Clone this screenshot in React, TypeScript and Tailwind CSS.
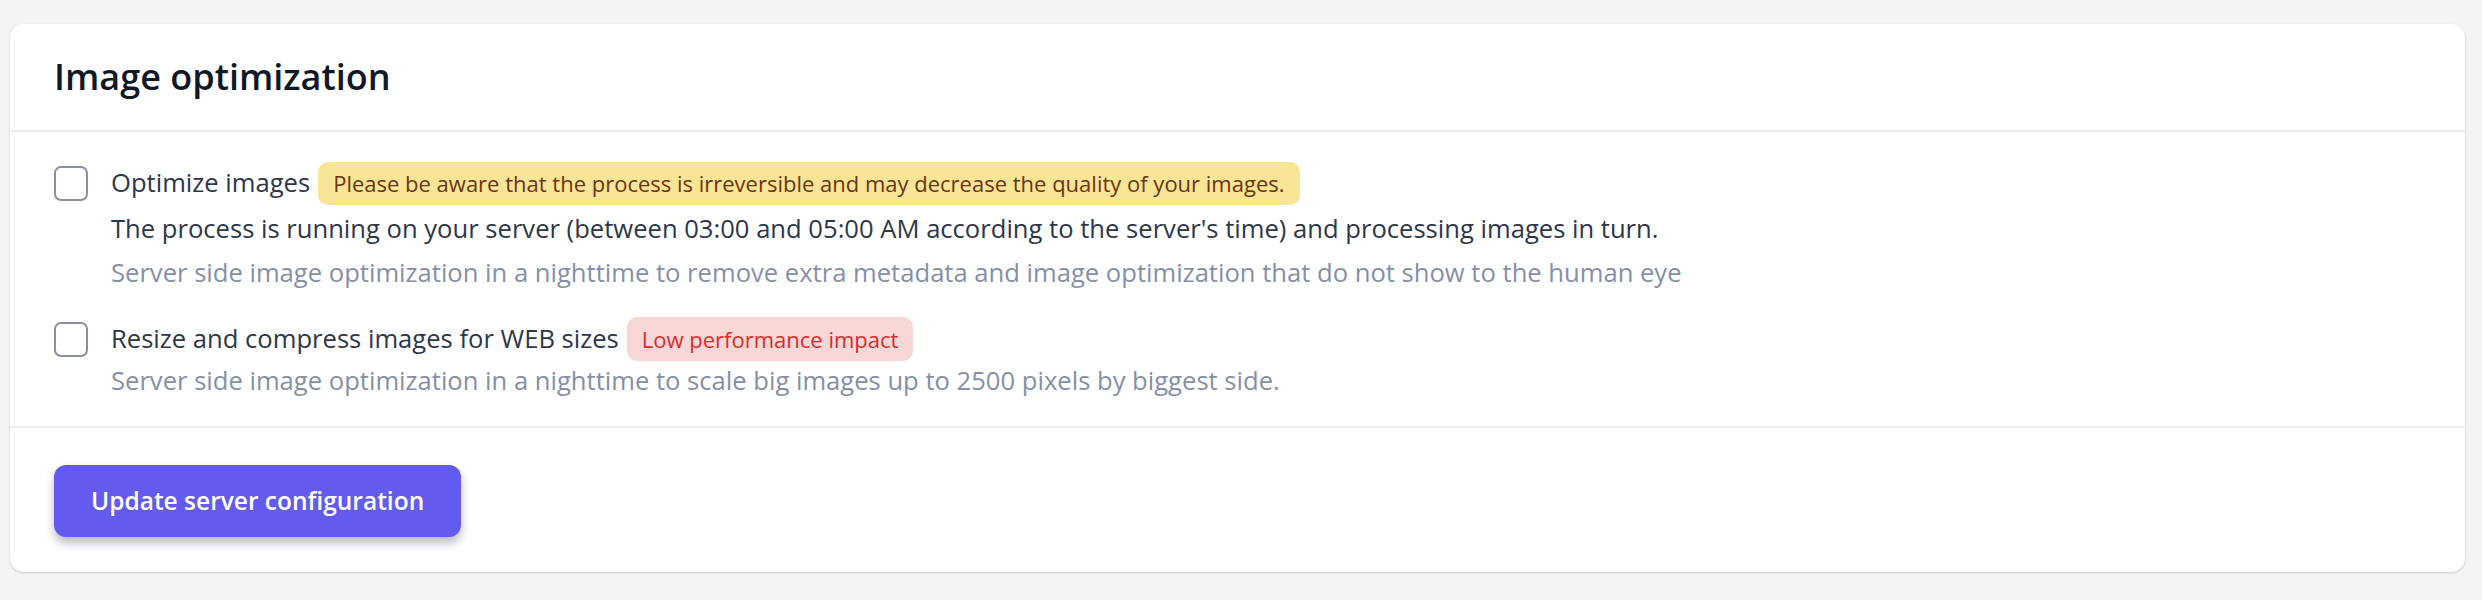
import React from "react";

function Checkbox() {
  return (
    <span className="block w-[34px] h-[35px] shrink-0 rounded-[7px] border-2 border-[#8b909c] bg-white" />
  );
}

export default function App() {
  return (
    <div
      className="w-[2482px] h-[600px] bg-[#f3f4f6] pt-[24px] pl-[10px]"
      style={{ fontFamily: '"Open Sans", "Noto Sans", sans-serif' }}
    >
      <div className="w-[2455px] h-[548px] bg-white rounded-[14px] shadow-[0_1px_3px_rgba(0,0,0,0.12),0_1px_2px_rgba(0,0,0,0.06)] flex flex-col">
        <div className="h-[108px] px-[44px] flex items-center border-b-2 border-[#e8e9ee]">
          <h2 className="text-[36px] font-semibold text-[#111827] leading-none">Image optimization</h2>
        </div>
        <div className="h-[296px] pl-[44px] pt-[29px] border-b-2 border-[#eceef1]">
          <div className="flex items-center h-[44px]">
            <Checkbox />
            <span className="ml-[23px] text-[25.6px] text-[#2d3748]">Optimize images</span>
            <span className="ml-[8px] h-[43px] px-[15px] flex items-center rounded-[10px] bg-[#f9e596] text-[#6b3512] text-[22px]">
              Please be aware that the process is irreversible and may decrease the quality of your images.
            </span>
          </div>
          <div className="mt-[2px] pl-[57px] text-[25.6px] leading-[44px] text-[#2d3748]">
            The process is running on your server (between 03:00 and 05:00 AM according to the server's time) and processing images in turn.
          </div>
          <div className="pl-[57px] text-[25.6px] leading-[44px] text-[#8590a6]">
            Server side image optimization in a nighttime to remove extra metadata and image optimization that do not show to the human eye
          </div>
          <div className="flex items-center h-[44px] mt-[22px]">
            <Checkbox />
            <span className="ml-[23px] text-[25.6px] text-[#2d3748]">Resize and compress images for WEB sizes</span>
            <span className="ml-[8px] h-[44px] px-[15px] flex items-center rounded-[10px] bg-[#f8d7d7] text-[#d92d2d] text-[22px]">
              Low performance impact
            </span>
          </div>
          <div className="pl-[57px] text-[25.6px] leading-[40px] text-[#8590a6]">
            Server side image optimization in a nighttime to scale big images up to 2500 pixels by biggest side.
          </div>
        </div>
        <div className="flex-1 pl-[44px] pt-[37px]">
          <button className="h-[72px] px-[37px] rounded-[12px] bg-[#635bef] text-white text-[24.5px] font-semibold shadow-[0_6px_10px_rgba(60,60,100,0.35)]">
            Update server configuration
          </button>
        </div>
      </div>
    </div>
  );
}
